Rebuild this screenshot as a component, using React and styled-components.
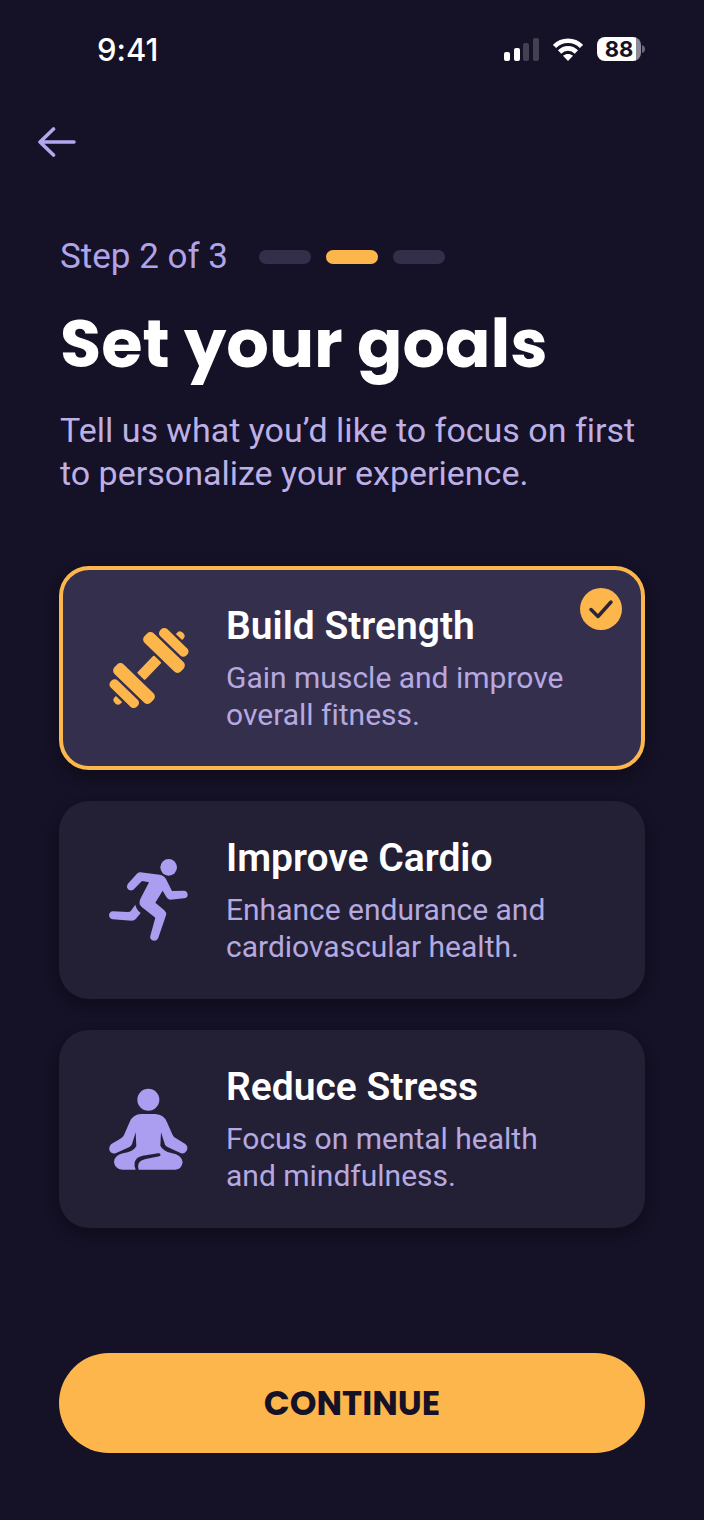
import React, { useState } from 'react';
import styled, { createGlobalStyle } from 'styled-components';

const GlobalStyle = createGlobalStyle`
  * {
    box-sizing: border-box;
  }

  body {
    margin: 0;
    background-color: #151126;
    font-family: Roboto, sans-serif;
    font-variant-ligatures: none;
  }
`;

const Screen = styled.main`
  display: flex;
  flex-direction: column;
  min-height: 100vh;
  padding: 27px 59px 67px;
  background-color: #151126;
`;

const StatusBar = styled.header`
  display: flex;
  align-items: center;
  justify-content: space-between;
  height: 44px;
  padding-left: 38px;
`;

const Clock = styled.time`
  font-family: Inter, sans-serif;
  font-size: 31px;
  font-weight: 500;
  color: #ffffff;
`;

const StatusIcons = styled.div`
  display: flex;
  align-items: center;
  gap: 14px;
`;

const Battery = styled.div`
  display: flex;
  align-items: center;
  gap: 1px;
`;

const BatteryLevel = styled.span`
  width: 44px;
  height: 24px;
  border-radius: 8px;
  background: linear-gradient(to right, #ffffff 88%, #8d8a98 88%);
  color: #151126;
  font-family: Inter, sans-serif;
  font-size: 22px;
  font-weight: 700;
  line-height: 25px;
  text-align: center;
`;

const BackButton = styled.button`
  display: flex;
  align-items: center;
  justify-content: center;
  width: 44px;
  height: 44px;
  margin: 49px 0 0 -24px;
  padding: 0;
  border: none;
  background: none;
  color: #b5a7ee;
  cursor: pointer;
`;

const Intro = styled.section`
  padding-left: 1px;
`;

const StepRow = styled.div`
  display: flex;
  align-items: center;
  gap: 31px;
  margin-top: 72px;
`;

const StepText = styled.span`
  font-size: 35px;
  line-height: 42px;
  color: #b0a3e8;
`;

const Steps = styled.div`
  display: flex;
  gap: 15px;
`;

const StepBar = styled.span`
  width: 52px;
  height: 14px;
  border-radius: 7px;
  background-color: ${props => props.$active ? '#fdb64b' : '#332e49'};
`;

const Title = styled.h1`
  margin: 22px 0 0;
  font-family: Poppins, Inter, sans-serif;
  font-size: 67px;
  font-weight: 700;
  line-height: 88px;
  color: #ffffff;
`;

const IntroText = styled.p`
  margin: 21px 0 0;
  font-size: 34px;
  line-height: 43px;
  color: #bcb0e6;
`;

const GoalList = styled.fieldset`
  display: flex;
  flex-direction: column;
  gap: 31px;
  min-width: 0;
  margin: 71px 0 0;
  padding: 0;
  border: none;
`;

const GoalCard = styled.label`
  position: relative;
  display: flex;
  align-items: center;
  gap: 36px;
  padding: ${props => props.$selected ? '33px 45px' : '34px 49px'};
  border: ${props => props.$selected ? '4px solid #fdb64b' : 'none'};
  border-radius: 30px;
  background-color: ${props => props.$selected ? '#352f4e' : '#231f34'};
  box-shadow: 0 6px 14px rgba(0, 0, 0, 0.3);
  color: ${props => props.$selected ? '#fdb64b' : '#ab9df0'};
  cursor: pointer;
`;

const GoalRadio = styled.input`
  position: absolute;
  inset: 0;
  width: 100%;
  height: 100%;
  margin: 0;
  opacity: 0;
  cursor: pointer;
`;

const GoalIcon = styled.svg`
  flex: none;
  width: 82px;
  height: 82px;
  overflow: visible;
`;

const GoalBody = styled.span`
  display: flex;
  flex-direction: column;
  gap: 10px;
`;

const GoalName = styled.span`
  font-size: 39px;
  font-weight: 600;
  line-height: 46px;
  color: #ffffff;
`;

const GoalText = styled.span`
  max-width: 350px;
  font-size: 30px;
  line-height: 37px;
  color: #b5a9e0;
`;

const CheckBadge = styled.svg`
  position: absolute;
  top: 18px;
  right: 19px;
  width: 42px;
  height: 42px;
`;

const ContinueButton = styled.button`
  height: 100px;
  margin-top: auto;
  border: none;
  border-radius: 50px;
  background-color: #fdb64b;
  color: #151126;
  font-family: Poppins, Inter, sans-serif;
  font-size: 34px;
  font-weight: 700;
  cursor: pointer;
`;

const SignalIcon = () => (
  <svg width="35" height="23" viewBox="0 0 35 23" fill="#ffffff">
    <rect x="0" y="14" width="6" height="9" rx="2" />
    <rect x="10" y="10" width="6" height="13" rx="2" />
    <rect x="19" y="5" width="6" height="18" rx="2" opacity="0.2" />
    <rect x="29" y="0" width="6" height="23" rx="2" opacity="0.2" />
  </svg>
);

const WifiIcon = () => (
  <svg width="30" height="23" viewBox="0 0 30 23" fill="none" stroke="#ffffff" strokeWidth="4.6">
    <path d="M1.5 8.4C9 .8 21 .8 28.5 8.4" />
    <path d="M6.6 14C11.5 9.2 18.5 9.2 23.4 14" />
    <path d="M15 23L10 17.8C13 15.3 17 15.3 20 17.8Z" fill="#ffffff" stroke="none" />
  </svg>
);

const ArrowIcon = () => (
  <svg width="38" height="30" viewBox="0 0 38 30" fill="none" stroke="currentColor" strokeWidth="3.6" strokeLinecap="round" strokeLinejoin="round">
    <path d="M15.5 2L2 15L15.5 28M2 15H36" />
  </svg>
);

const DumbbellIcon = () => (
  <GoalIcon viewBox="39 52 246 246" fill="currentColor" aria-hidden="true">
    <g transform="translate(162 175) rotate(-46) scale(1.07) translate(-162 -175)">
      <rect x="129" y="160" width="68" height="30" rx="3" />
      <rect x="204" y="104" width="37" height="142" rx="13" />
      <rect x="248" y="124" width="28" height="102" rx="12" />
      <path d="M283 163H290Q299 163 299 175T290 187H283Z" />
      <rect x="83" y="104" width="37" height="142" rx="13" />
      <rect x="48" y="124" width="28" height="102" rx="12" />
      <path d="M41 163H34Q25 163 25 175T34 187H41Z" />
    </g>
  </GoalIcon>
);

const RunnerIcon = () => (
  <GoalIcon viewBox="39 41 246 246" fill="currentColor" aria-hidden="true">
    <circle cx="221" cy="66" r="25" />
    <path d="M136 81L194 88Q207 90 213 101L231 137L266 136Q278 137 278 148Q278 158 267 159L226 163Q219 163 214 155L203 136L181 172L208 195Q215 201 213 210L190 277Q186 287 176 286Q163 283 166 271L181 217L141 186Q129 176 136 161L162 111L141 107L115 133Q106 138 99 132Q93 124 98 116L125 86Q130 80 136 81Z" />
    <path d="M121 178Q124 193 137 203L123 220Q118 226 110 226L53 222Q42 219 42 209Q44 198 54 198L99 200Q105 200 108 196Z" />
  </GoalIcon>
);

const LotusIcon = () => (
  <GoalIcon viewBox="39 38 246 246" fill="currentColor" aria-hidden="true">
    <circle cx="160" cy="73" r="33" />
    <path d="M139 116H181Q207 117 216 141L233 179Q236 186 243 189L271 206Q281 214 275 226Q269 236 258 234L219 216Q213 213 210 208L198 171L196 211Q204 227 229 233Q261 239 263 261Q260 282 241 283H131Q126 267 136 258Q142 253 152 251L193 243Q198 241 196 236Q194 233 189 234L143 241Q123 245 119 261Q117 273 122 283H82Q59 281 57 260Q58 240 84 234Q115 229 124 213L122 171L111 207Q108 213 102 216L62 234Q51 237 44 227Q40 215 49 206L76 190Q84 186 87 179L104 140Q113 117 139 116Z" />
  </GoalIcon>
);

const goals = [
  { id: 'strength', name: 'Build Strength', text: 'Gain muscle and improve overall fitness.', Icon: DumbbellIcon },
  { id: 'cardio', name: 'Improve Cardio', text: 'Enhance endurance and cardiovascular health.', Icon: RunnerIcon },
  { id: 'stress', name: 'Reduce Stress', text: 'Focus on mental health and mindfulness.', Icon: LotusIcon },
];

const App = () => {
  const [selected, setSelected] = useState('strength');

  return (
    <>
      <GlobalStyle />
      <Screen>
        <StatusBar>
          <Clock>9:41</Clock>
          <StatusIcons>
            <SignalIcon />
            <WifiIcon />
            <Battery>
              <BatteryLevel>88</BatteryLevel>
              <svg width="3" height="8" viewBox="0 0 3 8" fill="#6d6979">
                <path d="M0 0Q3 1 3 4T0 8Z" />
              </svg>
            </Battery>
          </StatusIcons>
        </StatusBar>
        <BackButton type="button" aria-label="Back">
          <ArrowIcon />
        </BackButton>
        <Intro>
          <StepRow>
            <StepText>Step 2 of 3</StepText>
            <Steps>
              {[1, 2, 3].map(step => <StepBar key={step} $active={step === 2} />)}
            </Steps>
          </StepRow>
          <Title>Set your goals</Title>
          <IntroText>Tell us what you’d like to focus on first to personalize your experience.</IntroText>
        </Intro>
        <GoalList aria-label="Goals">
          {goals.map(({ id, name, text, Icon }) => (
            <GoalCard key={id} htmlFor={id} $selected={selected === id}>
              <GoalRadio
                type="radio"
                name="goal"
                id={id}
                checked={selected === id}
                onChange={() => setSelected(id)}
              />
              <Icon />
              <GoalBody>
                <GoalName>{name}</GoalName>
                <GoalText>{text}</GoalText>
              </GoalBody>
              {selected === id && (
                <CheckBadge viewBox="0 0 42 42" aria-hidden="true">
                  <circle cx="21" cy="21" r="21" fill="#fdb64b" />
                  <path d="M11 21.5L18 28.5L31 14" fill="none" stroke="#2a2438" strokeWidth="3.5" strokeLinecap="round" strokeLinejoin="round" />
                </CheckBadge>
              )}
            </GoalCard>
          ))}
        </GoalList>
        <ContinueButton type="button">CONTINUE</ContinueButton>
      </Screen>
    </>
  );
};

export default App;
